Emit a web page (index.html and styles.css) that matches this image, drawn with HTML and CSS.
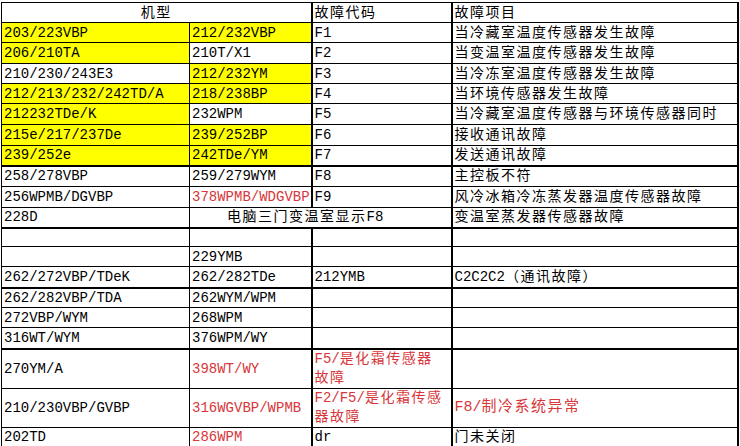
FILE: index.html
```html
<!DOCTYPE html>
<html lang="zh-CN">
<head>
<meta charset="utf-8">
<title>故障代码</title>
<link rel="stylesheet" href="styles.css">
</head>
<body>
<div class="sheet">
<table class="grid">
<colgroup><col class="c1"><col class="c2"><col class="c3"><col class="c4"></colgroup>
<tbody>
<tr class="h20"><td colspan="2" class="center cn">机型</td><td class="cn">故障代码</td><td class="cn">故障项目</td></tr>
<tr class="h20"><td class="y">203/223VBP</td><td class="y">212/232VBP</td><td>F1</td><td class="cn">当冷藏室温度传感器发生故障</td></tr>
<tr class="h21"><td class="y">206/210TA</td><td>210T/X1</td><td>F2</td><td class="cn">当变温室温度传感器发生故障</td></tr>
<tr class="h20"><td>210/230/243E3</td><td class="y">212/232YM</td><td>F3</td><td class="cn">当冷冻室温度传感器发生故障</td></tr>
<tr class="h20"><td class="y">212/213/232/242TD/A</td><td class="y">218/238BP</td><td>F4</td><td class="cn">当环境传感器发生故障</td></tr>
<tr class="h21"><td class="y">212232TDe/K</td><td>232WPM</td><td>F5</td><td class="cn">当冷藏室温度传感器与环境传感器同时</td></tr>
<tr class="h21"><td class="y">215e/217/237De</td><td class="y">239/252BP</td><td>F6</td><td class="cn">接收通讯故障</td></tr>
<tr class="h20 tk"><td class="y">239/252e</td><td class="y">242TDe/YM</td><td>F7</td><td class="cn">发送通讯故障</td></tr>
<tr class="h21"><td>258/278VBP</td><td>259/279WYM</td><td>F8</td><td class="cn">主控板不符</td></tr>
<tr class="h21"><td>256WPMB/DGVBP</td><td class="red">378WPMB/WDGVBP</td><td>F9</td><td class="cn">风冷冰箱冷冻蒸发器温度传感器故障</td></tr>
<tr class="h20 tk"><td>228D</td><td colspan="2" class="center mid"><span class="cn">电脑三门变温室显示</span>F8</td><td class="cn">变温室蒸发器传感器故障</td></tr>
<tr class="h19"><td></td><td></td><td></td><td></td></tr>
<tr class="h20"><td></td><td>229YMB</td><td></td><td></td></tr>
<tr class="h21 tk"><td>262/272VBP/TDeK</td><td>262/282TDe</td><td>212YMB</td><td>C2C2C2<span class="cn">（通讯故障）</span></td></tr>
<tr class="h20"><td>262/282VBP/TDA</td><td>262WYM/WPM</td><td></td><td></td></tr>
<tr class="h20"><td>272VBP/WYM</td><td>268WPM</td><td></td><td></td></tr>
<tr class="h21 tk"><td>316WT/WYM</td><td>376WPM/WY</td><td></td><td></td></tr>
<tr class="h38"><td>270YM/A</td><td class="red">398WT/WY</td><td class="red two">F5/<span class="cn">是化霜传感器</span><br><span class="cn">故障</span></td><td></td></tr>
<tr class="h38"><td>210/230VBP/GVBP</td><td class="red">316WGVBP/WPMB</td><td class="red two">F2/F5/<span class="cn">是化霜传感</span><br><span class="cn">器故障</span></td><td class="red big">F8/<span class="cn">制冷系统异常</span></td></tr>
<tr class="h20 tk"><td>202TD</td><td class="red">286WPM</td><td>dr</td><td class="cn">门未关闭</td></tr>
</tbody>
</table>
</div>
</body>
</html>
```

FILE: styles.css
```css
html, body {
  margin: 0;
  padding: 0;
  background: #ffffff;
}

.sheet {
  padding: 2px 0 0 1px;
}

.grid {
  border-collapse: collapse;
  table-layout: fixed;
  width: 737px;
  font-family: "Liberation Mono", "Noto Sans CJK SC", monospace;
  font-size: 14px;
  color: #000000;
}

.c1 { width: 188px; border-left: 1px solid #000; }
.c2 { width: 122px; }
.c3 { width: 140px; border-left: 2px solid #000; }
.c4 { width: 286px; border-left: 2px solid #000; border-right: 2px solid #000; }

.grid td {
  border: 1px solid #000000;
  padding: 0 2px;
  line-height: 18px;
  white-space: nowrap;
  overflow: hidden;
  vertical-align: middle;
}

.grid tr.tk { border-bottom: 2px solid #000000; }

.h19 { height: 19px; }
.h20 { height: 20px; }
.h21 { height: 21px; }
.h38 { height: 38px; }

.cn { letter-spacing: 1.5px; }

.grid td.center { text-align: center; }
.grid td.mid { padding-right: 32px; }
.grid td.y { background: #ffff00; }
.grid td.red { color: #d8363a; }
.grid td.two { line-height: 19px; }
.grid td.big { font-size: 15px; }
```
